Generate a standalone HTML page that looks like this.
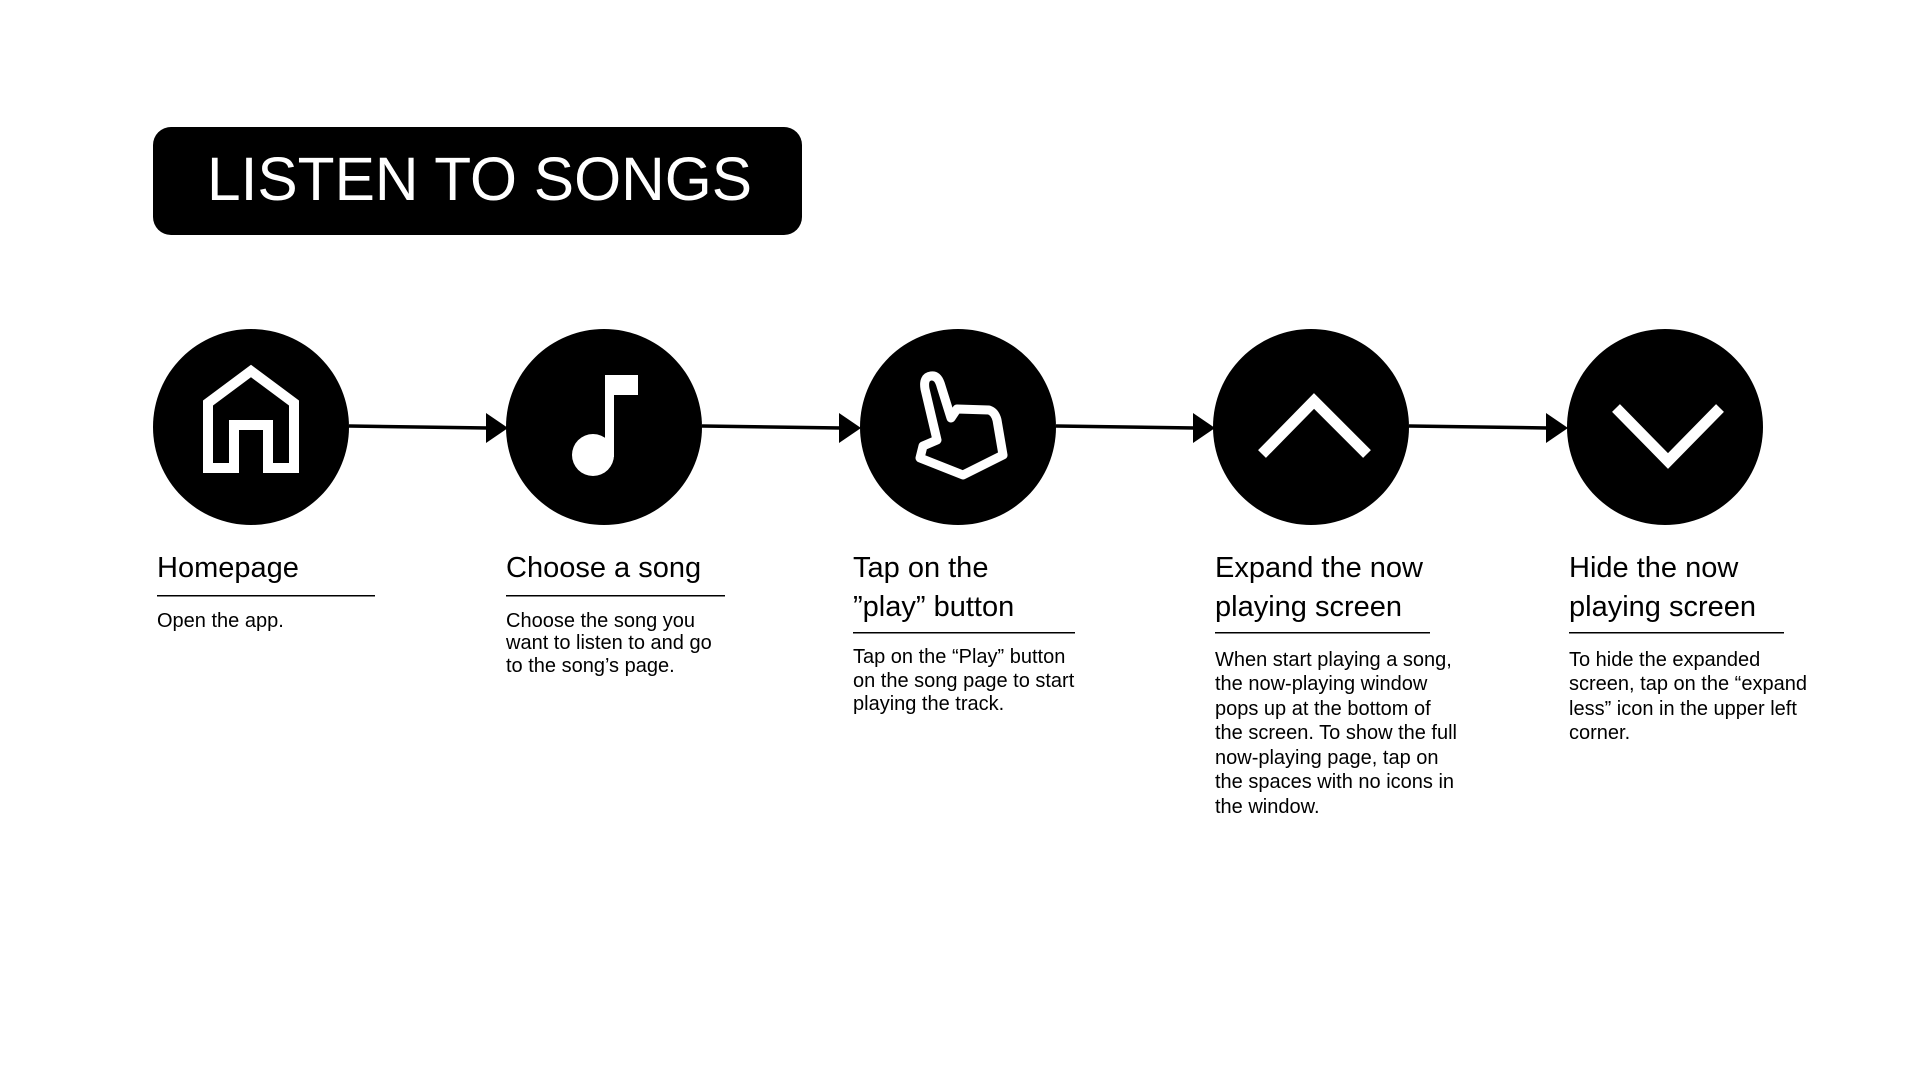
<!DOCTYPE html>
<html><head><meta charset="utf-8"><style>
html,body{margin:0;padding:0;background:#fff;}
svg{display:block;}
text{font-family:"Liberation Sans",sans-serif;fill:#000;}
</style></head><body>
<svg width="1920" height="1080" viewBox="0 0 1920 1080" xmlns="http://www.w3.org/2000/svg">
<rect x="153" y="127" width="649" height="108" rx="18" fill="#000"/>
<text x="207" y="200" font-size="61" textLength="545" lengthAdjust="spacingAndGlyphs" style="fill:#fff">LISTEN TO SONGS</text>

<g stroke="#000" stroke-width="3.5" fill="none">
<line x1="349" y1="426" x2="488" y2="428"/>
<line x1="702" y1="426" x2="841" y2="428"/>
<line x1="1056" y1="426" x2="1195" y2="428"/>
<line x1="1409" y1="426" x2="1548" y2="428"/>
</g>
<g fill="#000">
<polygon points="486,413 508,428 486,443"/>
<polygon points="839,413 861,428 839,443"/>
<polygon points="1193,413 1215,428 1193,443"/>
<polygon points="1546,413 1568,428 1546,443"/>
<circle cx="251" cy="427" r="98"/>
<circle cx="604" cy="427" r="98"/>
<circle cx="958" cy="427" r="98"/>
<circle cx="1311" cy="427" r="98"/>
<circle cx="1665" cy="427" r="98"/>
</g>

<path d="M208,468 V403 L251,371 L294,403 V468 H268 V425 H234 V468 Z" fill="none" stroke="#fff" stroke-width="10" stroke-linejoin="miter"/>
<rect x="605" y="375" width="33" height="20" fill="#fff"/>
<rect x="605" y="375" width="9" height="82" fill="#fff"/>
<ellipse cx="593" cy="455" rx="21" ry="21" fill="#fff"/>
<path d="M937,440 L925,389 Q923,377 931,376 Q938,375 941,386 L951,418 L957,409 L989,410 Q995,412 997,420 L1003,455 L963,475 L920,458 L923,446 Z" fill="none" stroke="#fff" stroke-width="9" stroke-linejoin="round"/>
<polyline points="1262,454 1314,401 1367,454" fill="none" stroke="#fff" stroke-width="11"/>
<polyline points="1616,408 1668,461 1720,408" fill="none" stroke="#fff" stroke-width="11"/>

<g font-size="29">
<text x="157" y="577">Homepage</text>
<text x="506" y="577">Choose a song</text>
<text x="853" y="577">Tap on the</text>
<text x="853" y="616">”play” button</text>
<text x="1215" y="577">Expand the now</text>
<text x="1215" y="616">playing screen</text>
<text x="1569" y="577">Hide the now</text>
<text x="1569" y="616">playing screen</text>
</g>
<g fill="#000">
<rect x="157" y="595" width="218" height="1.5"/>
<rect x="506" y="595" width="219" height="1.5"/>
<rect x="853" y="632" width="222" height="1.5"/>
<rect x="1215" y="632" width="215" height="1.5"/>
<rect x="1569" y="632" width="215" height="1.5"/>
</g>
<g font-size="20">
<text x="157" y="627">Open the app.</text>
<text x="506" y="627">Choose the song you</text>
<text x="506" y="649">want to listen to and go</text>
<text x="506" y="672">to the song’s page.</text>
<text x="853" y="663">Tap on the “Play” button</text>
<text x="853" y="687">on the song page to start</text>
<text x="853" y="710">playing the track.</text>
<text x="1215" y="666">When start playing a song,</text>
<text x="1215" y="690">the now-playing window</text>
<text x="1215" y="715">pops up at the bottom of</text>
<text x="1215" y="739">the screen. To show the full</text>
<text x="1215" y="764">now-playing page, tap on</text>
<text x="1215" y="788">the spaces with no icons in</text>
<text x="1215" y="813">the window.</text>
<text x="1569" y="666">To hide the expanded</text>
<text x="1569" y="690">screen, tap on the “expand</text>
<text x="1569" y="715">less” icon in the upper left</text>
<text x="1569" y="739">corner.</text>
</g>
</svg>
</body></html>
